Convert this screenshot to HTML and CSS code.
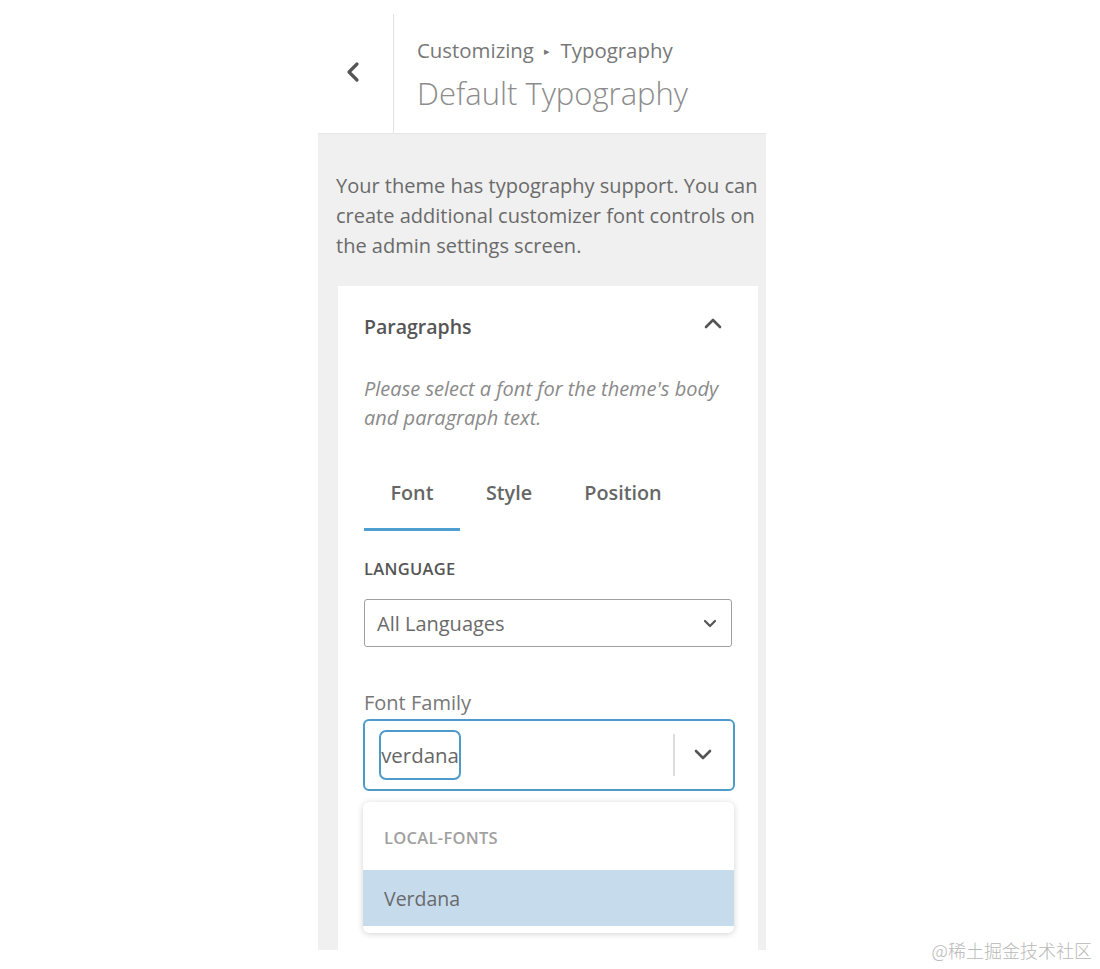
FILE: index.html
```html
<!DOCTYPE html>
<html lang="en">
<head>
<meta charset="utf-8">
<title>Default Typography</title>
<link rel="stylesheet" href="styles.css">
</head>
<body>
<div class="panel">
  <header class="header">
    <div class="back">
      <svg width="16" height="22" viewBox="0 0 16 22"><path d="M12 3 L4 11 L12 19" fill="none" stroke="#555" stroke-width="3.2" stroke-linecap="round" stroke-linejoin="round"/></svg>
    </div>
    <div class="titles">
      <div class="crumb">Customizing <span class="tri">&#9656;</span> Typography</div>
      <div class="title">Default Typography</div>
    </div>
  </header>
  <section class="body">
    <p class="desc">Your theme has typography support. You can create additional customizer font controls on the admin settings screen.</p>
    <div class="card">
      <div class="card-head">
        <span class="card-title">Paragraphs</span>
        <svg class="up" width="20" height="12" viewBox="0 0 20 12"><path d="M3 10 L10 3 L17 10" fill="none" stroke="#555" stroke-width="2.6" stroke-linecap="round" stroke-linejoin="round"/></svg>
      </div>
      <p class="hint">Please select a font for the theme's body and paragraph text.</p>
      <div class="tabs">
        <span class="tab active">Font</span>
        <span class="tab">Style</span>
        <span class="tab">Position</span>
      </div>
      <div class="label-caps">LANGUAGE</div>
      <div class="select">
        <span>All Languages</span>
        <svg width="14" height="9" viewBox="0 0 14 9"><path d="M2 2 L7 7 L12 2" fill="none" stroke="#555" stroke-width="2.2" stroke-linecap="round" stroke-linejoin="round"/></svg>
      </div>
      <div class="label">Font Family</div>
      <div class="combo">
        <span class="chip">verdana</span>
        <span class="sep"></span>
        <svg class="combo-arrow" width="20" height="12" viewBox="0 0 20 12"><path d="M3 2 L10 9 L17 2" fill="none" stroke="#555" stroke-width="2.6" stroke-linecap="round" stroke-linejoin="round"/></svg>
      </div>
      <div class="menu">
        <div class="group">LOCAL-FONTS</div>
        <div class="option">Verdana</div>
      </div>
    </div>
  </section>
</div>
<div class="watermark">@稀土掘金技术社区</div>
</body>
</html>
```
FILE: styles.css
```css
html, body {
  margin: 0;
  padding: 0;
  background: #fff;
}
body {
  font-family: "Open Sans", "Noto Sans", sans-serif;
  color: #666;
  height: 969px;
  overflow: hidden;
  position: relative;
}
.panel {
  margin-left: 318px;
  width: 448px;
}
.header {
  display: flex;
  height: 133px;
}
.back {
  width: 76px;
  margin-top: 14px;
  border-right: 1px solid #e2e2e2;
  display: flex;
  align-items: flex-start;
  justify-content: center;
  padding: 47px 6px 0 0;
  box-sizing: border-box;
}
.titles {
  padding-left: 23px;
  padding-top: 36px;
}
.crumb {
  font-size: 20.4px;
  color: #777;
  line-height: 28px;
}
.tri {
  font-size: 11px;
  vertical-align: 3px;
  margin: 0 5px;
}
.title {
  font-size: 31px;
  font-weight: 300;
  color: #8c8c8c;
  line-height: 42px;
  margin-top: 7px;
}
.body {
  background: #f0f0f0;
  height: 817px;
  padding: 37px 0 0 18px;
  box-sizing: border-box;
  border-top: 1px solid #e6e6e6;
}
.desc {
  margin: 0;
  font-size: 20px;
  line-height: 30px;
  color: #6a6a6a;
  width: 429px;
}
.card {
  margin-top: 25px;
  margin-left: 2px;
  width: 420px;
  height: 665px;
  background: #fff;
  padding: 0 26px;
  box-sizing: border-box;
}
.card-head {
  display: flex;
  justify-content: space-between;
  align-items: center;
  height: 80px;
}
.card-title {
  font-weight: 600;
  font-size: 19.5px;
  color: #555;
}
.up {
  margin-right: 9px;
  margin-top: -6px;
}
.hint {
  margin: 8px 0 0;
  font-style: italic;
  font-size: 20px;
  line-height: 29px;
  color: #8a8a8a;
}
.tabs {
  display: flex;
  margin-top: 49px;
}
.tab {
  font-size: 19.8px;
  font-weight: 600;
  color: #666;
  padding: 0 0 23px;
  height: 24px;
  line-height: 24px;
  text-align: center;
}
.tab:nth-child(1) { width: 96px; }
.tab:nth-child(2) { width: 98px; }
.tab:nth-child(3) { width: 130px; }
.tab.active {
  border-bottom: 3px solid #4e9fd1;
}
.label-caps {
  margin-top: 26px;
  font-size: 16.5px;
  font-weight: 600;
  color: #555;
  letter-spacing: 0.3px;
  line-height: 24px;
}
.select {
  margin-top: 18px;
  height: 48px;
  border: 1px solid #a0a0a0;
  border-radius: 3px;
  box-sizing: border-box;
  display: flex;
  align-items: center;
  justify-content: space-between;
  padding: 0 14px 0 12px;
  font-size: 20px;
  color: #6a6a6a;
}
.label {
  margin-top: 43px;
  font-size: 20px;
  color: #777;
  line-height: 26px;
}
.combo {
  margin-top: 3px;
  height: 72px;
  width: 372px;
  margin-left: -1px;
  border: 2px solid #4d9bcb;
  border-radius: 6px;
  box-sizing: border-box;
  display: flex;
  align-items: center;
  padding-left: 14px;
}
.chip {
  height: 50px;
  width: 82px;
  box-sizing: border-box;
  border: 2px solid #4d9bcb;
  border-radius: 7px;
  display: flex;
  align-items: center;
  justify-content: center;
  font-size: 20.4px;
  color: #666;
  white-space: nowrap;
}
.sep {
  width: 2px;
  height: 42px;
  background: #ddd;
  margin-left: auto;
}
.combo-arrow {
  margin: 0 20px 0 18px;
}
.menu {
  margin-top: 11px;
  margin-left: -1px;
  width: 371px;
  height: 131px;
  border-radius: 6px;
  box-shadow: 0 1px 6px rgba(0,0,0,0.18);
  background: #fff;
  overflow: hidden;
  padding-bottom: 7px;
  box-sizing: border-box;
}
.group {
  height: 68px;
  line-height: 72px;
  padding-left: 21px;
  font-size: 16.5px;
  font-weight: 600;
  color: #a0a0a0;
  letter-spacing: 0.3px;
}
.option {
  height: 56px;
  line-height: 58px;
  padding-left: 21px;
  background: #c6dced;
  font-size: 19.5px;
  color: #6a6a6a;
}
.watermark {
  position: absolute;
  right: 8px;
  top: 937px;
  font-family: "Noto Sans CJK SC", sans-serif;
  font-size: 18px;
  color: #b8b8b8;
  font-weight: 300;
}
```
